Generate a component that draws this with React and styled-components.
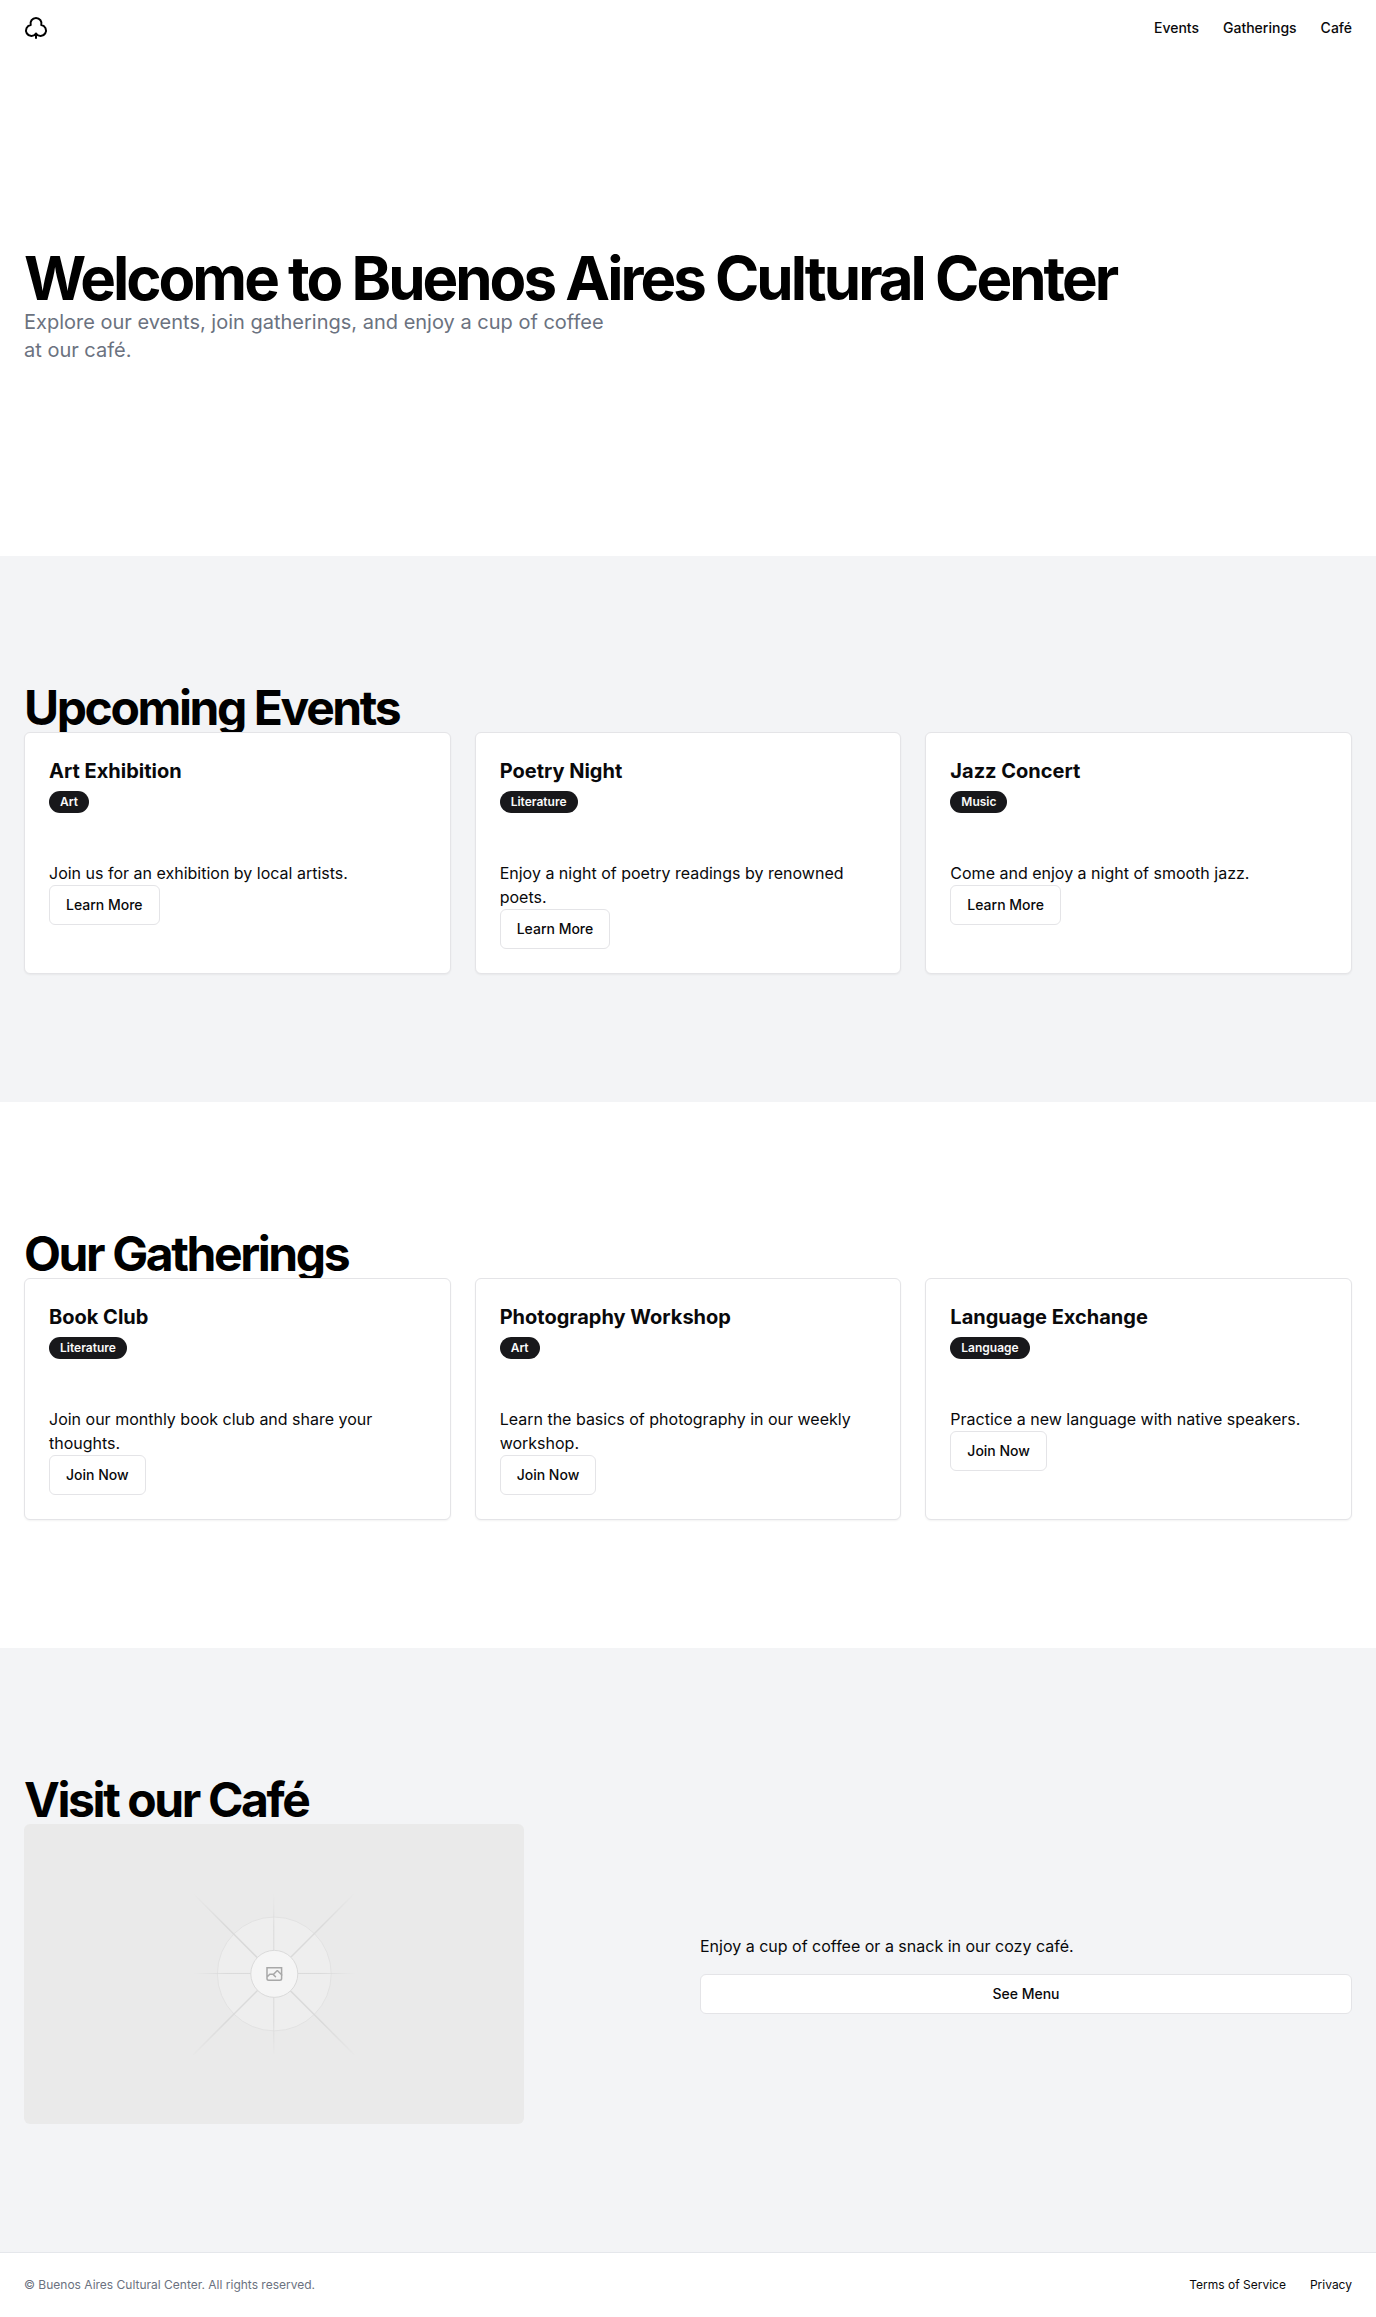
import React from "react";
import styled, { createGlobalStyle } from "styled-components";
import { Club } from "lucide-react";

const GlobalStyle = createGlobalStyle`
  *, *::before, *::after { box-sizing: border-box; }
  body {
    margin: 0;
    background: #ffffff;
    color: #09090b;
    font-family: Inter, "Liberation Sans", sans-serif;
    font-size: 16px;
    line-height: 24px;
  }
  h1, h2, h3, p { margin: 0; }
  a { color: inherit; text-decoration: none; }
`;

const Header = styled.header`
  display: flex;
  align-items: center;
  justify-content: space-between;
  height: 56px;
  padding: 0 24px;
`;

const Logo = styled.a`
  display: flex;
  color: #000000;
`;

const Nav = styled.nav`
  display: flex;
  gap: 24px;
`;

const NavLink = styled.a`
  font-size: ${(p) => (p.$small ? "12px" : "14px")};
  line-height: ${(p) => (p.$small ? "16px" : "20px")};
  font-weight: ${(p) => (p.$small ? 400 : 500)};
  &:hover { text-decoration: underline; text-underline-offset: 4px; }
`;

const Hero = styled.section`
  padding: 192px 24px;
`;

const HeroTitle = styled.h1`
  color: #000000;
  font-size: 60px;
  line-height: 60px;
  font-weight: 700;
  letter-spacing: -0.05em;
`;

const HeroText = styled.p`
  max-width: 600px;
  color: #6b7280;
  font-size: 20px;
  line-height: 28px;
`;

const Section = styled.section`
  padding: 128px 24px;
  background: ${(p) => (p.$muted ? "#f3f4f6" : "#ffffff")};
`;

const SectionTitle = styled.h2`
  color: #000000;
  font-size: 48px;
  line-height: 48px;
  font-weight: 700;
  letter-spacing: -0.05em;
`;

const Grid = styled.div`
  display: grid;
  grid-template-columns: repeat(${(p) => p.$columns}, minmax(0, 1fr));
  align-items: ${(p) => p.$align || "stretch"};
  gap: 24px;
  isolation: isolate;
  @media (max-width: 768px) { grid-template-columns: minmax(0, 1fr); }
`;

const Card = styled.article`
  border: 1px solid #e4e4e7;
  border-radius: 6px;
  background: #ffffff;
  box-shadow: 0 1px 2px rgba(0, 0, 0, 0.05);
`;

const CardHeader = styled.div`
  display: flex;
  flex-direction: column;
  align-items: flex-start;
  gap: 6px;
  padding: 24px;
`;

const CardTitle = styled.h3`
  font-size: 20px;
  line-height: 28px;
  font-weight: 700;
`;

const Badge = styled.span`
  padding: 3px 11px;
  border-radius: 11px;
  background: #18181b;
  color: #fafafa;
  font-size: 12px;
  line-height: 16px;
  font-weight: 600;
`;

const CardBody = styled.div`
  padding: 24px;
`;

const Button = styled.button`
  height: 40px;
  padding: 0 16px;
  border: 1px solid #e4e4e7;
  border-radius: 6px;
  background: #ffffff;
  color: #09090b;
  font-family: inherit;
  font-size: 14px;
  line-height: 20px;
  font-weight: 500;
  cursor: pointer;
  display: block;
  &:hover { background: #f4f4f5; }
`;

const Picture = styled.svg`
  display: block;
  width: 100%;
  max-width: 500px;
  border-radius: 6px;
`;

const CafeInfo = styled.div`
  display: flex;
  flex-direction: column;
  gap: 16px;
`;

const Footer = styled.footer`
  display: flex;
  flex-wrap: wrap;
  align-items: center;
  justify-content: space-between;
  gap: 8px;
  padding: 24px;
  border-top: 1px solid #e5e7eb;
`;

const Copyright = styled.p`
  color: #6b7280;
  font-size: 12px;
  line-height: 16px;
`;

const events = [
  { title: "Art Exhibition", tag: "Art", text: "Join us for an exhibition by local artists." },
  { title: "Poetry Night", tag: "Literature", text: "Enjoy a night of poetry readings by renowned poets." },
  { title: "Jazz Concert", tag: "Music", text: "Come and enjoy a night of smooth jazz." },
];

const gatherings = [
  { title: "Book Club", tag: "Literature", text: "Join our monthly book club and share your thoughts." },
  { title: "Photography Workshop", tag: "Art", text: "Learn the basics of photography in our weekly workshop." },
  { title: "Language Exchange", tag: "Language", text: "Practice a new language with native speakers." },
];

function CardSection({ id, title, items, action, muted }) {
  return (
    <Section id={id} $muted={muted}>
      <SectionTitle>{title}</SectionTitle>
      <Grid $columns={3}>
        {items.map((item) => (
          <Card key={item.title}>
            <CardHeader>
              <CardTitle>{item.title}</CardTitle>
              <Badge>{item.tag}</Badge>
            </CardHeader>
            <CardBody>
              <p>{item.text}</p>
              <Button type="button">{action}</Button>
            </CardBody>
          </Card>
        ))}
      </Grid>
    </Section>
  );
}

function Fade({ id, x1, y1, x2, y2 }) {
  return (
    <linearGradient id={id} x1={x1} y1={y1} x2={x2} y2={y2} gradientUnits="userSpaceOnUse">
      <stop stopColor="#c9c9c9" stopOpacity="0" />
      <stop offset="0.208" stopColor="#c9c9c9" />
      <stop offset="0.792" stopColor="#c9c9c9" />
      <stop offset="1" stopColor="#c9c9c9" stopOpacity="0" />
    </linearGradient>
  );
}

const rays = [
  { id: "rise", x1: 404, y1: 796, x2: 796, y2: 404, width: 3.6 },
  { id: "flat", x1: 404, y1: 598.7, x2: 796.6, y2: 598.7, width: 2.4 },
  { id: "tall", x1: 599.5, y1: 795.7, x2: 599.5, y2: 404, width: 2.4 },
  { id: "fall", x1: 795.7, y1: 796.6, x2: 404.3, y2: 405.2, width: 3.6 },
];

function Placeholder() {
  return (
    <Picture viewBox="0 240 1200 720" fill="none" role="img" aria-label="Café">
      <defs>
        {rays.map((r) => (
          <Fade key={r.id} id={r.id} x1={r.x1} y1={r.y1} x2={r.x2} y2={r.y2} />
        ))}
      </defs>
      <rect y="240" width="1200" height="720" fill="#eaeaea" />
      <g opacity="0.5">
        <circle cx="600.7" cy="599.9" r="136.6" fill="#fafafa" stroke="#c9c9c9" strokeWidth="2.4" opacity="0.5" />
        {rays.map((r) => (
          <path key={r.id} d={`M${r.x1} ${r.y1}L${r.x2} ${r.y2}`} stroke={`url(#${r.id})`} strokeWidth={r.width} />
        ))}
        <circle cx="600.7" cy="599.7" r="56.4" fill="#ffffff" stroke="#c9c9c9" strokeWidth="2.4" />
        <path
          fill="#666666"
          fillRule="evenodd"
          clipRule="evenodd"
          d="M616.426 586.58h-31.434v16.176l3.553-3.554.531-.531h9.068l.074-.074 8.463-8.463h2.565l7.18 7.181V586.58Zm-15.715 14.654 3.698 3.699 1.283 1.282-2.565 2.565-1.282-1.283-5.2-5.199h-6.066l-5.514 5.514-.073.073v2.876a2.418 2.418 0 0 0 2.418 2.418h26.598a2.418 2.418 0 0 0 2.418-2.418v-8.317l-8.463-8.463-7.181 7.181-.071.072Zm-19.347 5.442v4.085a6.045 6.045 0 0 0 6.046 6.045h26.598a6.044 6.044 0 0 0 6.045-6.045v-7.108l1.356-1.355-1.282-1.283-.074-.073v-17.989h-38.689v23.43l-.146.146.146.147Z"
        />
      </g>
    </Picture>
  );
}

export default function App() {
  return (
    <>
      <GlobalStyle />
      <Header>
        <Logo href="#" aria-label="Home">
          <Club size={24} />
        </Logo>
        <Nav>
          <NavLink href="#events">Events</NavLink>
          <NavLink href="#gatherings">Gatherings</NavLink>
          <NavLink href="#cafe">Café</NavLink>
        </Nav>
      </Header>
      <main>
        <Hero>
          <HeroTitle>Welcome to Buenos Aires Cultural Center</HeroTitle>
          <HeroText>Explore our events, join gatherings, and enjoy a cup of coffee at our café.</HeroText>
        </Hero>
        <CardSection id="events" title="Upcoming Events" items={events} action="Learn More" muted />
        <CardSection id="gatherings" title="Our Gatherings" items={gatherings} action="Join Now" />
        <Section id="cafe" $muted>
          <SectionTitle>Visit our Café</SectionTitle>
          <Grid $columns={2} $align="center">
            <Placeholder />
            <CafeInfo>
              <p>Enjoy a cup of coffee or a snack in our cozy café.</p>
              <Button type="button">See Menu</Button>
            </CafeInfo>
          </Grid>
        </Section>
      </main>
      <Footer>
        <Copyright>© Buenos Aires Cultural Center. All rights reserved.</Copyright>
        <Nav>
          <NavLink $small href="#terms">Terms of Service</NavLink>
          <NavLink $small href="#privacy">Privacy</NavLink>
        </Nav>
      </Footer>
    </>
  );
}
